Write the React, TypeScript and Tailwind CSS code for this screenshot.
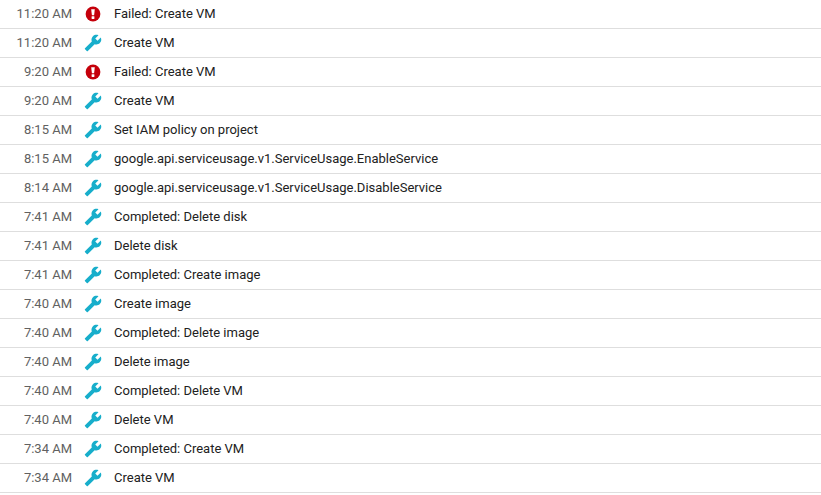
const rows: [string, string, boolean?][] = [
  ["11:20 AM", "Failed: Create VM", true],
  ["11:20 AM", "Create VM"],
  ["9:20 AM", "Failed: Create VM", true],
  ["9:20 AM", "Create VM"],
  ["8:15 AM", "Set IAM policy on project"],
  ["8:15 AM", "google.api.serviceusage.v1.ServiceUsage.EnableService"],
  ["8:14 AM", "google.api.serviceusage.v1.ServiceUsage.DisableService"],
  ["7:41 AM", "Completed: Delete disk"],
  ["7:41 AM", "Delete disk"],
  ["7:41 AM", "Completed: Create image"],
  ["7:40 AM", "Create image"],
  ["7:40 AM", "Completed: Delete image"],
  ["7:40 AM", "Delete image"],
  ["7:40 AM", "Completed: Delete VM"],
  ["7:40 AM", "Delete VM"],
  ["7:34 AM", "Completed: Create VM"],
  ["7:34 AM", "Create VM"],
];

function Wrench() {
  return (
    <svg width="18" height="18" viewBox="0 0 24 24" className="fill-[#17aecb] -scale-x-100">
      <path d="M22.7 19l-9.1-9.1c.9-2.3.4-5-1.5-6.9-2-2-5-2.4-7.4-1.3L9 6 6 9 1.6 4.7C.4 7.1.9 10.1 2.9 12.1c1.9 1.9 4.6 2.4 6.9 1.5l9.1 9.1c.4.4 1 .4 1.4 0l2.3-2.3c.5-.4.5-1.1.1-1.4z" />
    </svg>
  );
}

function ErrorIcon() {
  return (
    <svg width="18" height="18" viewBox="0 0 18 18">
      <circle cx="9" cy="9" r="7.4" fill="#c5000b" />
      <path d="M7.2 4.2h3.6l-.7 6h-2.2z" fill="#fff" />
      <rect x="7.6" y="11.2" width="2.8" height="2.8" rx="0.4" fill="#fff" />
    </svg>
  );
}

export default function App() {
  return (
    <div className="w-[821px] h-[495px] overflow-hidden bg-white font-['Roboto',sans-serif] text-[13px]">
      {rows.map(([time, label, failed], i) => (
        <div key={i} className="flex items-center h-[29px] pb-[2px] border-b border-[#dedede]">
          <div className="w-[72px] text-right text-[#616161] leading-none">{time}</div>
          <div className="w-[42px] pl-[12px] pt-[2px] flex items-center">
            {failed ? <ErrorIcon /> : <Wrench />}
          </div>
          <div className="text-[#212121] leading-none">{label}</div>
        </div>
      ))}
    </div>
  );
}
